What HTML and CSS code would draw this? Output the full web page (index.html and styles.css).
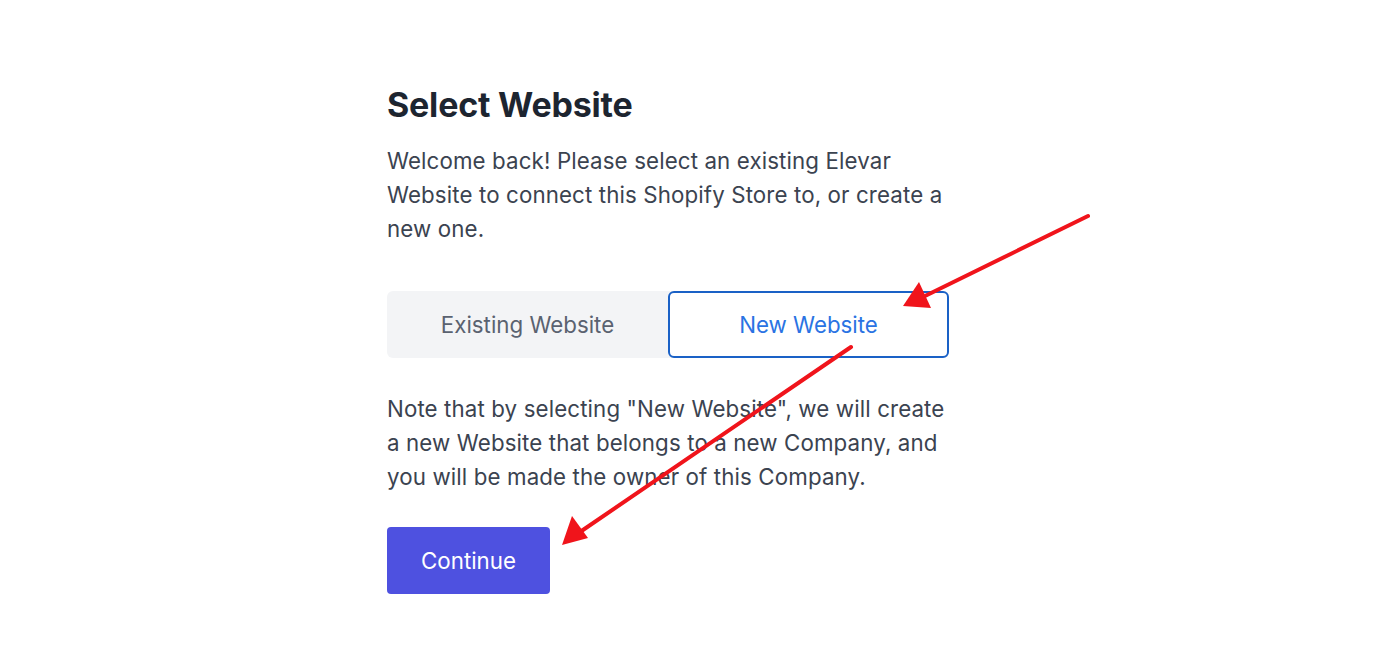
FILE: index.html
```html
<!DOCTYPE html>
<html>
<head>
<meta charset="utf-8">
<link rel="stylesheet" href="styles.css">
</head>
<body>
<main class="page">
  <section class="panel">
    <h1 class="title">Select Website</h1>
    <p class="text intro">Welcome back! Please select an existing Elevar Website to connect this Shopify Store to, or create a new one.</p>
    <div class="toggle">
      <button class="tab">Existing Website</button>
      <button class="tab tab-active">New Website</button>
    </div>
    <p class="text note">Note that by selecting "New Website", we will create a new Website that belongs to a new Company, and you will be made the owner of this Company.</p>
    <button class="continue">Continue</button>
  </section>
  <svg class="arrows" width="1376" height="654" viewBox="0 0 1376 654">
    <line x1="1088" y1="216" x2="925" y2="296" stroke="#f0141b" stroke-width="4" stroke-linecap="round"/>
    <polygon points="903,306 919,282 931,308" fill="#f0141b"/>
    <line x1="851" y1="347" x2="580" y2="532" stroke="#f0141b" stroke-width="4" stroke-linecap="round"/>
    <polygon points="562,545 572,516 588,538" fill="#f0141b"/>
  </svg>
</main>
</body>
</html>
```
FILE: styles.css
```css
* { box-sizing: border-box; }
html, body { margin: 0; padding: 0; background: #ffffff; }
body { font-family: Inter, "Noto Sans", sans-serif; }
.page { position: relative; width: 1376px; height: 654px; overflow: hidden; }
.panel { width: 562px; margin-left: 387px; padding-top: 84px; display: flex; flex-direction: column; align-items: flex-start; }
.title { margin: 0; font-size: 34px; line-height: 42px; font-weight: 700; color: #1d2530; letter-spacing: -0.2px; }
.text { margin: 0; font-size: 22.3px; line-height: 34px; color: #3b4350; letter-spacing: 0.12px; }
.intro { margin-top: 18px; }
.toggle { margin-top: 45px; display: flex; width: 562px; height: 67px; background: #f3f4f6; border-radius: 6px; }
.tab { flex: 1; border: 2px solid transparent; background: transparent; font-family: inherit; font-size: 22.3px; color: #5a6270; border-radius: 6px; padding: 0; }
.tab-active { background: #ffffff; border-color: #1a61c6; color: #2a73e3; }
.note { margin-top: 34px; }
.continue { margin-top: 33px; width: 163px; height: 67px; background: #4e51e0; color: #ffffff; border: none; border-radius: 4px; font-family: inherit; font-size: 22.3px; padding: 0; }
.arrows { position: absolute; left: 0; top: 0; pointer-events: none; }
```
